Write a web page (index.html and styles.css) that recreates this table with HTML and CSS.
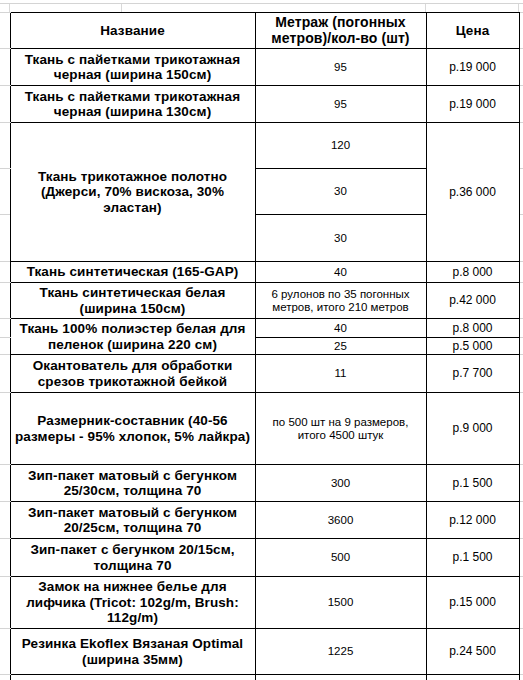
FILE: index.html
```html
<!DOCTYPE html>
<html lang="ru">
<head>
<meta charset="utf-8">
<title>Прайс</title>
<link rel="stylesheet" href="styles.css">
</head>
<body>
<div class="topstrip">
  <div class="ts ts-a"></div>
  <div class="ts ts-b"></div>
  <div class="ts ts-c"></div>
  <div class="ts ts-d"></div>
  <div class="ts ts-e"></div>
</div>
<table class="sheet">
  <colgroup>
    <col class="c-gut">
    <col class="c-name">
    <col class="c-qty">
    <col class="c-price">
    <col class="c-gut2">
  </colgroup>
  <tr class="h36">
    <td class="gut"></td>
    <th class="name">Название</th>
    <th class="qty-h">Метраж (погонных<br>метров)/кол-во (шт)</th>
    <th class="price-h">Цена</th>
    <td class="gut2"></td>
  </tr>
  <tr class="h37">
    <td class="gut"></td>
    <td class="name">Ткань с пайетками трикотажная<br>черная (ширина 150см)</td>
    <td class="qty">95</td>
    <td class="price">р.19 000</td>
    <td class="gut2"></td>
  </tr>
  <tr class="h37">
    <td class="gut"></td>
    <td class="name">Ткань с пайетками трикотажная<br>черная (ширина 130см)</td>
    <td class="qty">95</td>
    <td class="price">р.19 000</td>
    <td class="gut2"></td>
  </tr>
  <tr class="h46">
    <td class="gut"></td>
    <td class="name" rowspan="3">Ткань трикотажное полотно<br>(Джерси, 70% вискоза, 30%<br>эластан)</td>
    <td class="qty">120</td>
    <td class="price" rowspan="3">р.36 000</td>
    <td class="gut2"></td>
  </tr>
  <tr class="h46">
    <td class="gut"></td>
    <td class="qty">30</td>
    <td class="gut2"></td>
  </tr>
  <tr class="h47">
    <td class="gut"></td>
    <td class="qty">30</td>
    <td class="gut2"></td>
  </tr>
  <tr class="h21">
    <td class="gut"></td>
    <td class="name">Ткань синтетическая (165-GAP)</td>
    <td class="qty">40</td>
    <td class="price">р.8 000</td>
    <td class="gut2"></td>
  </tr>
  <tr class="h36">
    <td class="gut"></td>
    <td class="name">Ткань синтетическая белая<br>(ширина 150см)</td>
    <td class="qty">6 рулонов по 35 погонных<br>метров, итого 210 метров</td>
    <td class="price">р.42 000</td>
    <td class="gut2"></td>
  </tr>
  <tr class="h19">
    <td class="gut"></td>
    <td class="name" rowspan="2">Ткань 100% полиэстер белая для<br>пеленок (ширина 220 см)</td>
    <td class="qty">40</td>
    <td class="price">р.8 000</td>
    <td class="gut2"></td>
  </tr>
  <tr class="h17">
    <td class="gut"></td>
    <td class="qty">25</td>
    <td class="price">р.5 000</td>
    <td class="gut2"></td>
  </tr>
  <tr class="h38">
    <td class="gut"></td>
    <td class="name">Окантователь для обработки<br>срезов трикотажной бейкой</td>
    <td class="qty">11</td>
    <td class="price">р.7 700</td>
    <td class="gut2"></td>
  </tr>
  <tr class="h72">
    <td class="gut"></td>
    <td class="name">Размерник-составник (40-56<br>размеры - 95% хлопок, 5% лайкра)</td>
    <td class="qty">по 500 шт на 9 размеров,<br>итого 4500 штук</td>
    <td class="price">р.9 000</td>
    <td class="gut2"></td>
  </tr>
  <tr class="h37">
    <td class="gut"></td>
    <td class="name">Зип-пакет матовый с бегунком<br>25/30см, толщина 70</td>
    <td class="qty">300</td>
    <td class="price">р.1 500</td>
    <td class="gut2"></td>
  </tr>
  <tr class="h37">
    <td class="gut"></td>
    <td class="name">Зип-пакет матовый с бегунком<br>20/25см, толщина 70</td>
    <td class="qty">3600</td>
    <td class="price">р.12 000</td>
    <td class="gut2"></td>
  </tr>
  <tr class="h38">
    <td class="gut"></td>
    <td class="name">Зип-пакет с бегунком 20/15см,<br>толщина 70</td>
    <td class="qty">500</td>
    <td class="price">р.1 500</td>
    <td class="gut2"></td>
  </tr>
  <tr class="h52">
    <td class="gut"></td>
    <td class="name">Замок на нижнее белье для<br>лифчика (Tricot: 102g/m, Brush:<br>112g/m)</td>
    <td class="qty">1500</td>
    <td class="price">р.15 000</td>
    <td class="gut2"></td>
  </tr>
  <tr class="h46">
    <td class="gut"></td>
    <td class="name">Резинка Ekoflex Вязаная Optimal<br>(ширина 35мм)</td>
    <td class="qty">1225</td>
    <td class="price">р.24 500</td>
    <td class="gut2"></td>
  </tr>
  <tr class="h40">
    <td class="gut"></td>
    <td class="name"></td>
    <td class="qty"></td>
    <td class="price"></td>
    <td class="gut2"></td>
  </tr>
</table>
</body>
</html>
```

FILE: styles.css
```css
html, body {
  margin: 0;
  padding: 0;
  background: #ffffff;
}

body {
  width: 523px;
  height: 680px;
  overflow: hidden;
  font-family: "Liberation Sans", Arial, sans-serif;
  color: #000;
}

.topstrip {
  display: flex;
  height: 8px;
  margin-top: 3px;
  border-top: 1px solid #d4d4d4;
}

.ts {
  height: 100%;
  box-sizing: border-box;
  border-right: 1px solid #d9d9d9;
}

.ts-a { width: 10px; }
.ts-b { width: 112px; }
.ts-c { width: 304px; }
.ts-d { width: 93px; }
.ts-e { flex: 1; border-right: none; }

.sheet {
  border-collapse: collapse;
  table-layout: fixed;
  width: 524px;
}

.c-gut { width: 10px; }
.c-name { width: 245px; }
.c-qty { width: 171px; }
.c-price { width: 93px; }
.c-gut2 { width: 5px; }

.sheet td,
.sheet th {
  padding: 0 1px;
  text-align: center;
  vertical-align: middle;
  overflow: hidden;
  white-space: nowrap;
}

.name, .qty, .price, .qty-h, .price-h {
  border: 1px solid #000;
}

.gut,
.gut2 {
  border-top: 1px solid #d4d4d4;
  border-bottom: 1px solid #d4d4d4;
  border-left: none;
  border-right: none;
  padding: 0 !important;
}

.name, .qty-h, .price-h {
  font-weight: bold;
  font-size: 13.5px;
  line-height: 15.5px;
  letter-spacing: 0.1px;
}

.qty-h {
  font-size: 14px;
}

.qty, .price {
  font-size: 11.5px;
  line-height: 13px;
  font-weight: normal;
}

.price {
  font-size: 12px;
}

.h17 { height: 17px; }
.h19 { height: 19px; }
.h21 { height: 21px; }
.h36 { height: 36px; }
.h37 { height: 37px; }
.h38 { height: 38px; }
.h40 { height: 40px; }
.h46 { height: 46px; }
.h47 { height: 47px; }
.h52 { height: 52px; }
.h72 { height: 72px; }
```
